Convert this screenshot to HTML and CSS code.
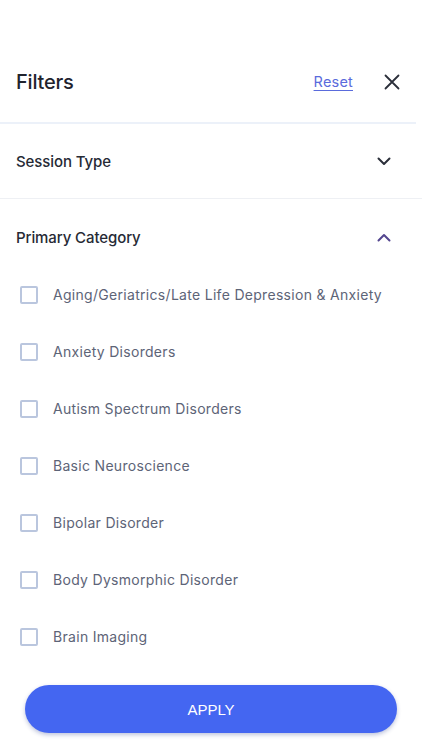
FILE: index.html
```html
<!DOCTYPE html>
<html>
<head>
<meta charset="utf-8">
<link rel="stylesheet" href="styles.css">
</head>
<body>
<div class="sheet">
  <header class="top">
    <h1 class="title">Filters</h1>
    <a class="reset" href="#">Reset</a>
    <button class="close" aria-label="Close">
      <svg width="16" height="16" viewBox="0 0 16 16"><path d="M1.5 1.5 L14.5 14.5 M14.5 1.5 L1.5 14.5" stroke="#2b2f3a" stroke-width="1.8" stroke-linecap="round" fill="none"/></svg>
    </button>
  </header>
  <section class="group">
    <div class="group-head">
      <span class="group-title">Session Type</span>
      <svg class="chev" width="14" height="9" viewBox="0 0 14 9"><path d="M1.5 1.5 L7 7 L12.5 1.5" stroke="#2b2f3a" stroke-width="2" fill="none" stroke-linecap="round" stroke-linejoin="round"/></svg>
    </div>
  </section>
  <section class="group open">
    <div class="group-head">
      <span class="group-title">Primary Category</span>
      <svg class="chev" width="14" height="9" viewBox="0 0 14 9"><path d="M1.5 7.5 L7 2 L12.5 7.5" stroke="#54468f" stroke-width="2" fill="none" stroke-linecap="round" stroke-linejoin="round"/></svg>
    </div>
    <ul class="options">
      <li class="opt"><span class="box"></span><span>Aging/Geriatrics/Late Life Depression &amp; Anxiety</span></li>
      <li class="opt"><span class="box"></span><span>Anxiety Disorders</span></li>
      <li class="opt"><span class="box"></span><span>Autism Spectrum Disorders</span></li>
      <li class="opt"><span class="box"></span><span>Basic Neuroscience</span></li>
      <li class="opt"><span class="box"></span><span>Bipolar Disorder</span></li>
      <li class="opt"><span class="box"></span><span>Body Dysmorphic Disorder</span></li>
      <li class="opt"><span class="box"></span><span>Brain Imaging</span></li>
    </ul>
  </section>
  <button class="apply">APPLY</button>
</div>
</body>
</html>
```
FILE: styles.css
```css
* { box-sizing: border-box; }
html, body { margin: 0; padding: 0; background: #fff; }
body { font-family: "Inter", "Liberation Sans", sans-serif; width: 422px; height: 750px; overflow: hidden; }
.sheet { position: relative; height: 750px; padding-top: 62px; }
.top {
  display: flex; align-items: flex-start;
  padding: 8px 16px 0 16px;
  margin-right: 6px;
  border-bottom: 2px solid #ecf1f9;
  height: 62px;
}
.title { margin: 0; font-size: 20px; font-weight: 500; color: #1f232d; flex: 1; letter-spacing: -0.2px; line-height: 24px; }
.reset { color: #5a6bdc; font-size: 14.5px; margin-right: 31px; text-decoration: underline; text-underline-offset: 3px; line-height: 24px; letter-spacing: 0.2px; }
.close { border: 0; background: none; padding: 0; width: 16px; height: 16px; margin-top: 4px; display: flex; }
.group-head { display: flex; align-items: center; justify-content: space-between; padding: 0 31px 0 16px; height: 74px; }
.group:first-of-type { border-bottom: 1px solid #eef0f4; }
.group-title { font-size: 15px; font-weight: 500; color: #262a35; letter-spacing: -0.1px; }
.group.open .group-head { height: 76px; }
.options { list-style: none; margin: 0; padding: 0; }
.opt { display: flex; align-items: center; height: 57px; padding-left: 20px; font-size: 14px; color: #5d6477; letter-spacing: 0.3px; }
.opt:first-child { margin-top: -9px; }
.box { width: 18px; height: 18px; border: 2px solid #bac6de; border-radius: 2px; margin-right: 15px; flex: none; }
.apply {
  position: absolute; left: 25px; top: 685px; width: 372px; height: 48px;
  border: 0; border-radius: 24px; background: #4466f1; color: #fff;
  font-family: "Liberation Sans", sans-serif; font-size: 15px;
  box-shadow: 0 2px 4px rgba(40, 60, 140, 0.3);
}
```
